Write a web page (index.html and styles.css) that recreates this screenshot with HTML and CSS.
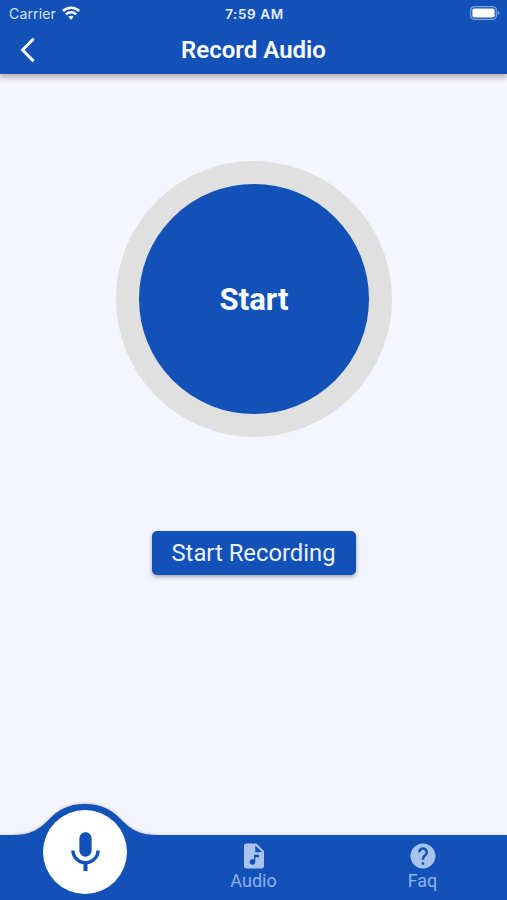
FILE: index.html
```html
<!DOCTYPE html>
<html lang="en">
<head>
    <meta charset="UTF-8">
    <meta name="viewport" content="width=device-width, initial-scale=1.0">
    <title>Record Audio</title>
    <link rel="stylesheet" href="styles.css">
</head>
<body>

<div class="screen">
    <header class="header">
        <div class="status-bar">
            <div class="carrier">
                <span>Carrier</span>
                <svg class="wifi" viewBox="0 0 18 14" fill="none" stroke="#fff" stroke-width="2.6">
                    <path d="M.9 5C5.5 .6 12.5 .6 17.1 5"/>
                    <path d="M3.9 8.4C6.8 5.6 11.2 5.6 14.1 8.4"/>
                    <path d="M9 13.7L6.3 10.8C7.8 9.4 10.2 9.4 11.7 10.8Z" fill="#fff" stroke="none"/>
                </svg>
            </div>
            <span class="time">7:59 AM</span>
            <svg class="battery" viewBox="0 0 30 14">
                <rect x=".7" y=".7" width="25.6" height="12.6" rx="3.6" fill="none" stroke="#7fa2dc" stroke-width="1.2"/>
                <rect x="2.4" y="2.4" width="22.2" height="9.2" rx="1.8" fill="#fff"/>
                <path d="M27.8 4.8c2 .7 2 3.7 0 4.4z" fill="#7fa2dc"/>
            </svg>
        </div>
        <div class="title-bar">
            <svg class="back" viewBox="0 0 16 26" fill="none" stroke="#fff" stroke-width="3">
                <path d="M13.6 1.8L2.6 13l11 11.2"/>
            </svg>
            <h1>Record Audio</h1>
        </div>
    </header>

    <main class="content">
        <div class="dial">Start</div>
        <button class="record-btn">Start Recording</button>
    </main>

    <nav class="tab-bar">
        <!-- Raised bump behind the active tab -->
        <svg class="bump" viewBox="0 0 170 34">
            <path d="M14 34V32C34 32 42 23 49 16.5C58 7 68 1 85 1S112 7 121 16.5C128 23 136 32 156 32V34Z" fill="#1252b8"/>
        </svg>
        <a class="tab active">
            <span class="mic">
                <svg viewBox="0 0 24 24" fill="#1252b8">
                    <path d="M12 15c1.66 0 2.99-1.34 2.99-3L15 6c0-1.66-1.34-3-3-3S9 4.34 9 6v6c0 1.66 1.34 3 3 3zm5.3-3c0 3-2.54 5.1-5.3 5.1S6.7 15 6.7 12H5c0 3.42 2.72 6.23 6 6.72V22h2v-3.28c3.28-.48 6-3.3 6-6.72h-1.7z"/>
                </svg>
            </span>
        </a>
        <a class="tab">
            <svg class="tab-icon" viewBox="0 0 24 24">
                <path d="M14 2H6c-1.1 0-1.99.9-1.99 2L4 20c0 1.1.89 2 1.99 2H18c1.1 0 2-.9 2-2V8l-6-6zm2 11h-3v3.75c0 1.24-1.01 2.25-2.25 2.25S8.5 17.99 8.5 16.75s1.01-2.25 2.25-2.25c.46 0 .89.14 1.25.38V11h4v2zm-3-4V3.5L18.5 9H13z"/>
            </svg>
            <span>Audio</span>
        </a>
        <a class="tab">
            <svg class="tab-icon" viewBox="0 0 24 24">
                <path d="M12 2C6.48 2 2 6.48 2 12s4.48 10 10 10 10-4.48 10-10S17.52 2 12 2zm1 17h-2v-2h2v2zm2.07-7.75l-.9.92C13.45 12.9 13 13.5 13 15h-2v-.5c0-1.1.45-2.1 1.17-2.83l1.24-1.26c.37-.36.59-.86.59-1.41 0-1.1-.9-2-2-2s-2 .9-2 2H8c0-2.21 1.79-4 4-4s4 1.79 4 4c0 .88-.36 1.68-.93 2.25z"/>
            </svg>
            <span>Faq</span>
        </a>
    </nav>
</div>

</body>
</html>
```

FILE: styles.css
```css
* {
    box-sizing: border-box;
}
body {
    margin: 0;
    font-family: Roboto, sans-serif;
    background-color: #f5f5ff;
}
.screen {
    display: flex;
    flex-direction: column;
    height: 900px;
    overflow: hidden;
}
.header {
    height: 74px;
    background-color: #1252b8;
    color: white;
    box-shadow: 0 4px 5px rgba(60, 50, 60, 0.32);
}
.status-bar {
    display: grid;
    grid-template-columns: 1fr auto 1fr;
    align-items: center;
    height: 27px;
    padding: 0 7px 0 9px;
    font-family: Inter, sans-serif;
    font-size: 14px;
}
.carrier {
    display: flex;
    align-items: center;
    gap: 6px;
    color: #d5e3fb;
    letter-spacing: 0.15px;
}
.wifi {
    width: 18px;
    height: 14px;
    margin-top: -2px;
}
.time {
    font-size: 13.5px;
    font-weight: 600;
    letter-spacing: 0.6px;
    color: #e8f0ff;
}
.battery {
    justify-self: end;
    width: 30px;
    height: 14px;
    margin-top: -1px;
}
.title-bar {
    display: grid;
    grid-template-columns: 1fr auto 1fr;
    align-items: center;
    height: 46px;
    padding: 0 20px;
}
.back {
    width: 16px;
    height: 26px;
}
.title-bar h1 {
    margin: 0;
    font-size: 24px;
    font-weight: 600;
}
.content {
    flex: 1;
    display: flex;
    flex-direction: column;
    align-items: center;
    padding-top: 87px;
}
.dial {
    display: flex;
    align-items: center;
    justify-content: center;
    width: 276px;
    height: 276px;
    margin-left: 1px;
    border: 23px solid #e0e0e0;
    border-radius: 50%;
    background-color: #1252b8;
    color: white;
    font-size: 31px;
    font-weight: 700;
}
.record-btn {
    width: 204px;
    height: 44px;
    margin-top: 94px;
    padding: 0;
    border: none;
    border-radius: 5px;
    background-color: #1252b8;
    color: #e9f1ff;
    font-family: inherit;
    font-size: 23.8px;
    box-shadow: 0 2px 4px rgba(40, 40, 60, 0.4);
}
.tab-bar {
    position: relative;
    display: grid;
    grid-template-columns: repeat(3, 1fr);
    height: 65px;
    background-color: #1252b8;
    box-shadow: 0 0 3px rgba(40, 40, 60, 0.2);
}
.bump {
    position: absolute;
    left: 0;
    top: -32px;
    width: 170px;
    height: 34px;
    filter: drop-shadow(0 -1px 1px rgba(40, 40, 60, 0.2));
}
.tab {
    display: flex;
    flex-direction: column;
    align-items: center;
    padding-top: 6px;
    color: #8fb0e6;
    font-size: 18px;
    line-height: 20px;
}
.tab-icon {
    width: 30px;
    height: 30px;
    fill: #a9c3ee;
}
.tab.active {
    padding: 0;
}
.mic {
    position: relative;
    display: flex;
    align-items: center;
    justify-content: center;
    width: 84px;
    height: 84px;
    margin-top: -25px;
    padding: 0 0 3px 1px;
    border-radius: 50%;
    background-color: white;
}
.mic svg {
    width: 49px;
    height: 49px;
}
```
